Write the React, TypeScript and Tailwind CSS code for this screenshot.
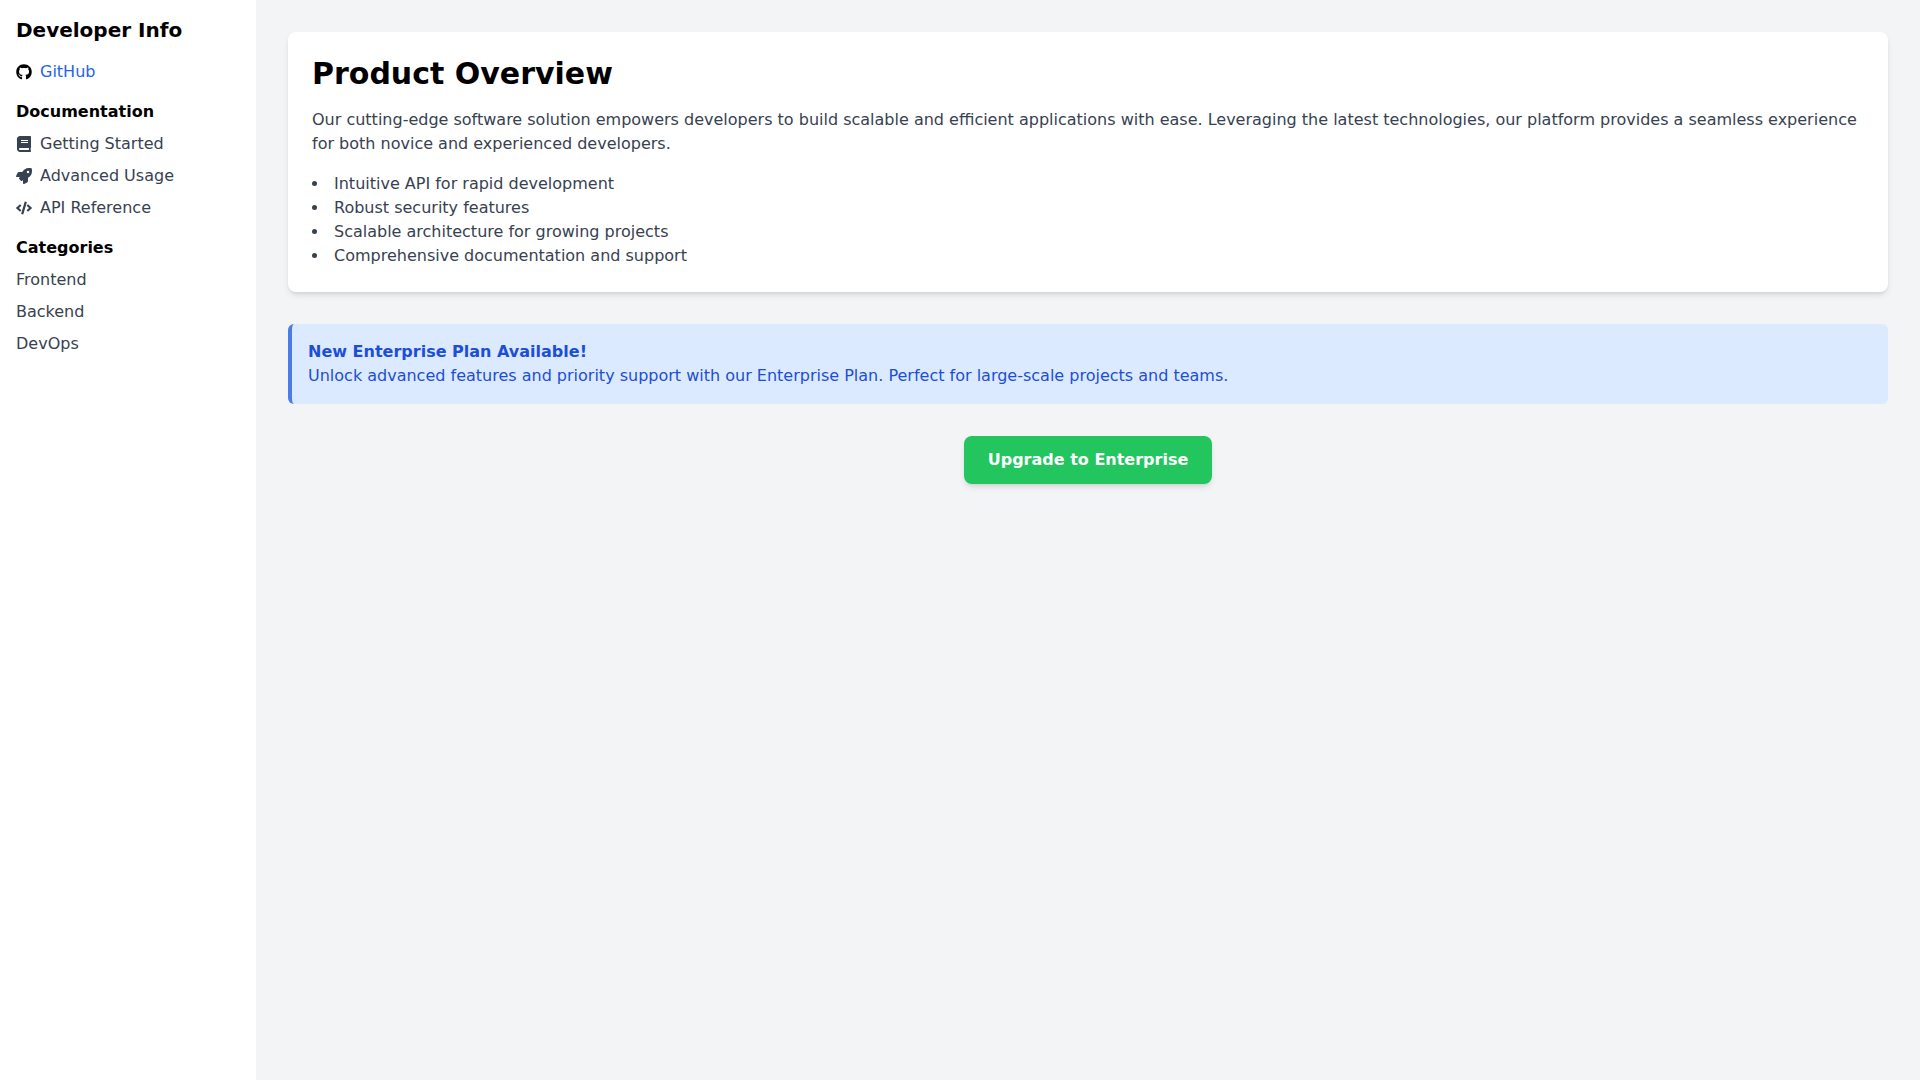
import { FaBook, FaCode, FaGithub, FaRocket } from "react-icons/fa"

const docs = [
  { label: "Getting Started", Icon: FaBook },
  { label: "Advanced Usage", Icon: FaRocket },
  { label: "API Reference", Icon: FaCode },
]

const categories = ["Frontend", "Backend", "DevOps"]

const features = [
  "Intuitive API for rapid development",
  "Robust security features",
  "Scalable architecture for growing projects",
  "Comprehensive documentation and support",
]

export default function App() {
  return (
    <div className="flex min-h-screen bg-[#f3f4f6] font-['DejaVu_Sans',sans-serif] text-base antialiased">
      <aside className="w-64 shrink-0 bg-white p-4">
        <h2 className="mb-4 text-xl font-bold">Developer Info</h2>
        <a href="#" className="mb-4 flex items-center gap-2 text-[#2563eb]">
          <FaGithub className="h-4 w-4 text-black" />
          GitHub
        </a>
        <h3 className="mb-2 font-bold">Documentation</h3>
        <ul className="mb-4 space-y-2 text-[#374151]">
          {docs.map(({ label, Icon }) => (
            <li key={label} className="flex items-center gap-2">
              <Icon className="h-4 w-4" />
              {label}
            </li>
          ))}
        </ul>
        <h3 className="mb-2 font-bold">Categories</h3>
        <ul className="space-y-2 text-[#374151]">
          {categories.map((c) => (
            <li key={c}>{c}</li>
          ))}
        </ul>
      </aside>

      <main className="flex-1 p-8">
        <section className="mb-8 rounded-lg bg-white p-6 shadow-md">
          <h1 className="mb-4 text-3xl font-bold">Product Overview</h1>
          <p className="mb-4 text-[#374151]">
            Our cutting-edge software solution empowers developers to build scalable and efficient applications with ease. Leveraging the latest technologies, our platform provides a seamless experience for both novice and experienced developers.
          </p>
          <ul className="list-inside list-disc text-[#374151]">
            {features.map((f) => (
              <li key={f}>{f}</li>
            ))}
          </ul>
        </section>

        <div className="mb-8 rounded-md border-l-4 border-[#4a7cea] bg-[#dbeafe] p-4 text-[#1d4ed8]">
          <p className="font-bold">New Enterprise Plan Available!</p>
          <p>Unlock advanced features and priority support with our Enterprise Plan. Perfect for large-scale projects and teams.</p>
        </div>

        <div className="flex justify-center">
          <button className="rounded-lg bg-[#22c55e] px-6 py-3 font-bold text-white shadow-md">Upgrade to Enterprise</button>
        </div>
      </main>
    </div>
  )
}
